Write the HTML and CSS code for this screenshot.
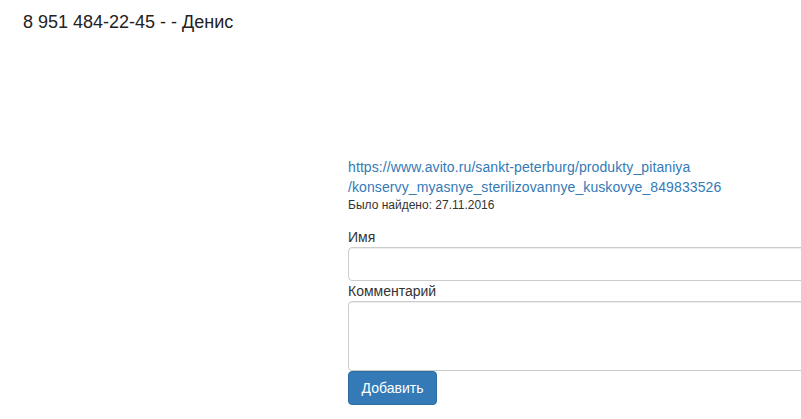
FILE: index.html
```html
<!DOCTYPE html>
<html lang="ru">
<head>
<meta charset="utf-8">
<title>Денис</title>
<link rel="stylesheet" href="styles.css">
</head>
<body>
<div class="page">
  <h1 class="title">8 951 484-22-45 - - Денис</h1>
  <div class="content">
    <div class="main">
      <a class="link" href="#">https://www.avito.ru/sankt-peterburg/produkty_pitaniya<br>/konservy_myasnye_sterilizovannye_kuskovye_849833526</a>
      <div class="found">Было найдено: 27.11.2016</div>
      <form class="form">
        <label class="label" for="name">Имя</label>
        <input class="control" id="name" type="text">
        <label class="label" for="comment">Комментарий</label>
        <textarea class="control area" id="comment"></textarea>
        <button class="btn" type="button">Добавить</button>
      </form>
    </div>
  </div>
</div>
</body>
</html>
```
FILE: styles.css
```css
html, body {
  margin: 0;
  padding: 0;
  overflow: hidden;
  background: #fff;
}
body {
  font-family: "Liberation Sans", Arial, sans-serif;
  font-size: 14px;
  line-height: 20px;
  color: #333;
}
.page {
  padding: 12px 0 0 23px;
}
.title {
  margin: 0;
  font-size: 18px;
  font-weight: normal;
  line-height: 20px;
  color: #222;
}
.content {
  display: flex;
  padding-top: 125px;
  padding-left: 325px;
}
.main {
  display: flex;
  flex-direction: column;
  width: 520px;
  flex-shrink: 0;
}
.link {
  color: #337ab7;
  text-decoration: none;
  letter-spacing: 0.1px;
}
.found {
  font-size: 12px;
  line-height: 17px;
  margin-bottom: 13px;
}
.form {
  display: flex;
  flex-direction: column;
  align-items: flex-start;
}
.label {
  display: block;
  line-height: 20px;
}
.control {
  display: block;
  width: 100%;
  box-sizing: border-box;
  height: 34px;
  margin: 0;
  padding: 6px 12px;
  border: 1px solid #ccc;
  border-radius: 4px;
  box-shadow: inset 0 1px 1px rgba(0,0,0,.075);
  font: inherit;
  background: #fff;
}
.area {
  height: 70px;
  resize: none;
}
.btn {
  height: 34px;
  margin: 0;
  padding: 6px 12px;
  border: 1px solid #2e6da4;
  border-radius: 4px;
  background: #337ab7;
  color: #fff;
  font: inherit;
  font-size: 14px;
  line-height: 20px;
  width: 89px;
}
```
